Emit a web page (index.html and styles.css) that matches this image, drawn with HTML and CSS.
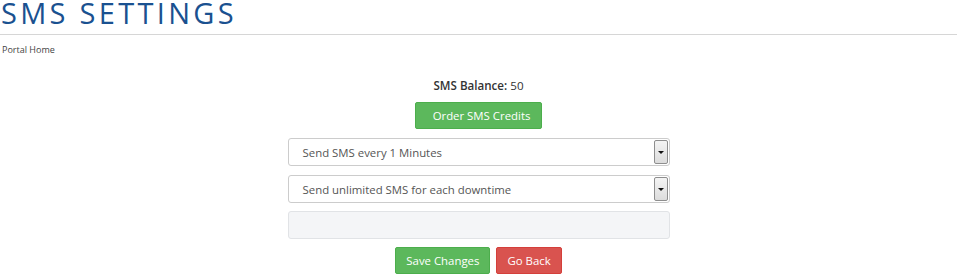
FILE: index.html
```html
<!DOCTYPE html>
<html>
<head>
  <title>SMS Settings</title>
  <link rel="stylesheet" href="styles.css">
</head>
<body>
  <div class="page">
    <h1 class="page-title">SMS SETTINGS</h1>
    <div class="breadcrumb"><a href="#">Portal Home</a></div>

    <form class="sms-form">
      <p class="balance"><strong>SMS Balance:</strong> 50</p>
      <p class="order"><a class="btn btn-success btn-order" href="#">Order SMS Credits</a></p>

      <div class="select-box">
        <span>Send SMS every 1 Minutes</span>
        <i class="select-arrow"></i>
      </div>
      <div class="select-box">
        <span>Send unlimited SMS for each downtime</span>
        <i class="select-arrow"></i>
      </div>
      <input class="text-field" type="text" disabled>

      <div class="actions">
        <a class="btn btn-success" href="#">Save Changes</a>
        <a class="btn btn-danger" href="#">Go Back</a>
      </div>
    </form>
  </div>
</body>
</html>
```

FILE: styles.css
```css
body {
  margin: 0;
  font-family: "Open Sans", "Liberation Sans", sans-serif;
  font-size: 11.4px;
  color: #333333;
  background: #ffffff;
}

.page {
  width: 957px;
}

.page-title {
  margin: 0;
  padding: 0 0 0 1px;
  height: 34px;
  border-bottom: 1px solid #d6d6d6;
  font-family: "Open Sans", sans-serif;
  font-weight: 400;
  font-size: 29px;
  line-height: 26px;
  letter-spacing: 3.3px;
  color: #1a5190;
}

.breadcrumb {
  padding: 8px 2px 0;
  font-size: 9px;
  line-height: 13px;
}
.breadcrumb a {
  color: #444444;
  text-decoration: none;
}

.sms-form {
  width: 382px;
  margin: 0 auto;
  padding-top: 21px;
  text-align: center;
}
.sms-form p {
  margin: 0;
}

.balance {
  line-height: 18px;
  font-size: 11.6px;
  margin-bottom: 7px !important;
}
.balance strong {
  font-weight: 600;
}

.btn {
  display: inline-block;
  box-sizing: border-box;
  height: 27px;
  padding: 0 10px;
  border: 1px solid transparent;
  border-radius: 2px;
  font-size: 11.4px;
  line-height: 25px;
  white-space: nowrap;
  color: #ffffff;
  text-decoration: none;
}
.btn-success {
  background: #5cb85c;
  border-color: #4cae4c;
}
.btn-danger {
  background: #d9534f;
  border-color: #d43f3a;
}
.btn-order {
  padding-left: 17px;
  padding-right: 11px;
}
.order {
  height: 27px;
}

.select-box {
  display: flex;
  align-items: center;
  box-sizing: border-box;
  height: 28px;
  margin-top: 9px;
  padding: 0 1px 0 14px;
  border: 1px solid #cccccc;
  border-radius: 3px;
  text-align: left;
  color: #555555;
}
.select-box span {
  flex: 1;
}

.select-arrow {
  box-sizing: border-box;
  width: 14px;
  height: 24px;
  border: 1px solid #8e8e8e;
  border-radius: 2px;
  background: linear-gradient(#f4f4f4, #dcdcdc);
  position: relative;
}
.select-arrow::after {
  content: "";
  position: absolute;
  left: 3px;
  top: 10px;
  border-left: 3px solid transparent;
  border-right: 3px solid transparent;
  border-top: 3px solid #111111;
}

.text-field {
  display: block;
  box-sizing: border-box;
  width: 382px;
  height: 28px;
  margin-top: 8px;
  border: 1px solid #e1e3e6;
  border-radius: 3px;
  background: #f4f5f7;
}

.actions {
  display: flex;
  justify-content: center;
  gap: 6px;
  margin-top: 8px;
  margin-left: 0;
}
```
